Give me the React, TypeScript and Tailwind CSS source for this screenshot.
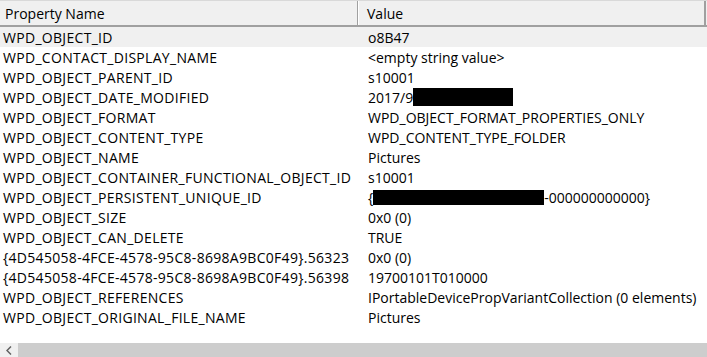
import React from "react";

const rows: [string, React.ReactNode][] = [
  ["WPD_OBJECT_ID", "o8B47"],
  ["WPD_CONTACT_DISPLAY_NAME", "<empty string value>"],
  ["WPD_OBJECT_PARENT_ID", "s10001"],
  [
    "WPD_OBJECT_DATE_MODIFIED",
    <span className="flex items-center">
      2017/9
      <span className="inline-block h-[18px] w-[100px] bg-black" />
    </span>,
  ],
  ["WPD_OBJECT_FORMAT", "WPD_OBJECT_FORMAT_PROPERTIES_ONLY"],
  ["WPD_OBJECT_CONTENT_TYPE", "WPD_CONTENT_TYPE_FOLDER"],
  ["WPD_OBJECT_NAME", "Pictures"],
  ["WPD_OBJECT_CONTAINER_FUNCTIONAL_OBJECT_ID", "s10001"],
  [
    "WPD_OBJECT_PERSISTENT_UNIQUE_ID",
    <span className="flex items-center">
      {"{"}
      <span className="inline-block h-[15px] w-[171px] bg-black" />
      {"-000000000000}"}
    </span>,
  ],
  ["WPD_OBJECT_SIZE", "0x0 (0)"],
  ["WPD_OBJECT_CAN_DELETE", "TRUE"],
  ["{4D545058-4FCE-4578-95C8-8698A9BC0F49}.56323", "0x0 (0)"],
  ["{4D545058-4FCE-4578-95C8-8698A9BC0F49}.56398", "19700101T010000"],
  ["WPD_OBJECT_REFERENCES", "IPortableDevicePropVariantCollection (0 elements)"],
  ["WPD_OBJECT_ORIGINAL_FILE_NAME", "Pictures"],
];

export default function App() {
  return (
    <div
      className="w-[707px] h-[357px] bg-white text-[14px] text-black overflow-hidden flex flex-col"
      style={{ fontFamily: '"Open Sans", sans-serif' }}
    >
      <div className="flex h-[27px] shrink-0 bg-[#f0f0f0] border-t border-[#d9d9d9] border-b-2 border-b-[#a0a0a0]">
        <div className="w-[358px] shrink-0 pl-[5px] flex items-center border-r border-r-[#a0a0a0] shadow-[1px_0_0_#ffffff]">
          Property Name
        </div>
        <div className="flex-1 pl-[9px] flex items-center border-r-2 border-r-[#a0a0a0]">Value</div>
        <div className="w-[1px]" />
      </div>
      <div className="flex flex-col">
        {rows.map(([k, v], i) => (
          <div
            key={i}
            className={`flex h-[20px] items-center ${i === 0 ? "bg-[#f0f0f0]" : ""}`}
          >
            <div className="w-[365px] shrink-0 pl-[3px] whitespace-nowrap tracking-[0.3px]">{k}</div>
            <div className="flex-1 pl-[3px] whitespace-nowrap">{v}</div>
          </div>
        ))}
      </div>
      <div className="flex-1" />
      <div className="h-[14px] shrink-0 flex">
        <div className="w-[18px] bg-[#f0f0f0] flex items-center justify-center">
          <svg width="6" height="9" viewBox="0 0 6 9">
            <path d="M5 0.5 L1 4.5 L5 8.5" stroke="#606060" strokeWidth="1.5" fill="none" />
          </svg>
        </div>
        <div className="flex-1 bg-[#cdcdcd]" />
      </div>
    </div>
  );
}
